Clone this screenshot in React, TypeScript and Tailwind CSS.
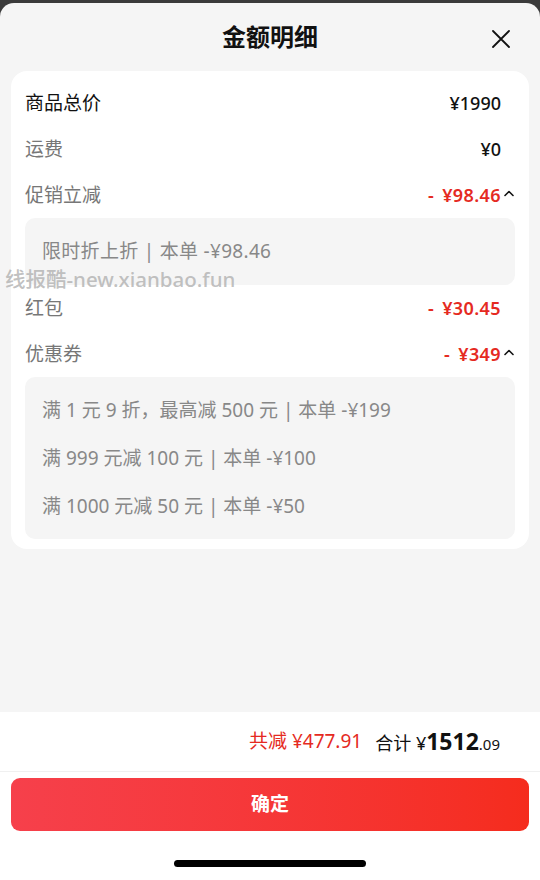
import React from "react";

const font = "font-['Noto_Sans','Noto_Sans_CJK_SC',sans-serif]";

function Chevron() {
  return (
    <svg width="12" height="8" viewBox="0 0 12 8" fill="none">
      <path d="M2 6.5L6 2.5L10 6.5" stroke="#111" strokeWidth="1.6" strokeLinecap="round" strokeLinejoin="round" />
    </svg>
  );
}

function Row({ label, value, dark, red, open }: { label: string; value: string; dark?: boolean; red?: boolean; open?: boolean }) {
  return (
    <div className="flex h-[46px] items-center pl-[14px] pr-[14px]">
      <span className={`flex-1 text-[19px] ${dark ? "text-[#111]" : "text-[#777]"}`}>{label}</span>
      {red ? (
        <span className="flex text-[18px] font-semibold tracking-[0.4px] text-[#e52a22]">
          <span>-</span>
          <span className="ml-[8px]">{value}</span>
        </span>
      ) : (
        <span className="text-[18px] font-medium text-[#111]">{value}</span>
      )}
      <span className="flex w-[14px] justify-end pb-[4px]">{open && <Chevron />}</span>
    </div>
  );
}

export default function App() {
  const coupons = ["满 1 元 9 折，最高减 500 元 | 本单 -¥199", "满 999 元减 100 元 | 本单 -¥100", "满 1000 元减 50 元 | 本单 -¥50"];

  return (
    <div className={`relative flex h-[880px] w-[540px] flex-col bg-[#3b3b3b] ${font}`}>
      <div className="mt-[3px] flex flex-1 flex-col overflow-hidden rounded-t-[14px] bg-[#f5f5f5]">
        <div className="relative flex h-[68px] items-center justify-center">
          <h1 className="text-[24px] font-bold text-[#111]">金额明细</h1>
          <svg className="absolute right-[29px] top-[26px]" width="20" height="20" viewBox="0 0 20 20">
            <path d="M2 2L18 18M18 2L2 18" stroke="#111" strokeWidth="1.8" strokeLinecap="round" />
          </svg>
        </div>

        <div className="mx-[11px] rounded-[16px] bg-white pb-[10px] pt-[9px]">
          <Row label="商品总价" value="¥1990" dark />
          <Row label="运费" value="¥0" />
          <Row label="促销立减" value="¥98.46" red open />
          <div className="mx-[14px] flex h-[67px] items-center rounded-[10px] bg-[#f5f5f5] px-[17px] text-[19px] tracking-[0.3px] text-[#888]">
            限时折上折 | 本单 -¥98.46
          </div>
          <Row label="红包" value="¥30.45" red />
          <Row label="优惠券" value="¥349" red open />
          <div className="mx-[14px] flex flex-col rounded-[10px] bg-[#f5f5f5] px-[17px] py-[9px] text-[19px] text-[#888]">
            {coupons.map((c) => (
              <div key={c} className="flex h-[48px] items-center">{c}</div>
            ))}
          </div>
        </div>
        <div className="flex-1" />

        <div className="flex h-[168px] flex-col bg-white">
          <div className="flex h-[60px] items-center justify-end gap-[13px] border-b border-[#f0f0f0] pr-[40px]">
            <span className="text-[19px] text-[#e52a22]">共减 ¥477.91</span>
            <span className="flex items-baseline text-[#111]">
              <span className="text-[18px]">合计 ¥</span>
              <span className="text-[23px] font-bold">1512</span>
              <span className="text-[15px]">.09</span>
            </span>
          </div>
          <button className="mx-[11px] mt-[6px] flex h-[53px] items-center justify-center rounded-[9px] bg-gradient-to-r from-[#f6404b] to-[#f52c1d] text-[19px] font-bold text-white">
            确定
          </button>
          <div className="mx-auto mt-[29px] h-[7px] w-[192px] rounded-full bg-black" />
        </div>
      </div>

      <div className="pointer-events-none absolute left-[5px] top-[264px] text-[20.5px] font-medium text-[#b0b0b0]/80">
        线报酷-new.xianbao.fun
      </div>
    </div>
  );
}
